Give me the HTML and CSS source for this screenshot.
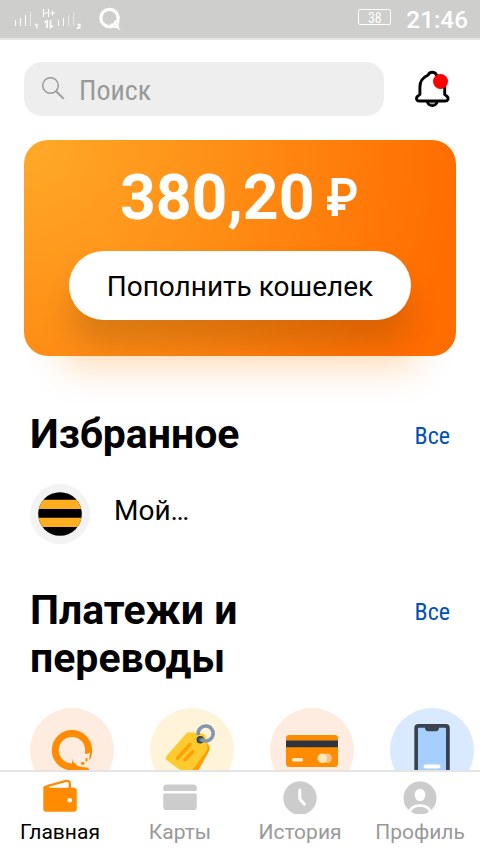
FILE: index.html
```html
<!DOCTYPE html>
<html lang="ru">
<head>
<meta charset="utf-8">
<meta name="viewport" content="width=device-width, initial-scale=1">
<title>Кошелек</title>
<link rel="stylesheet" href="styles.css">
</head>
<body>
<div class="app">
  <header class="status">
    <svg class="status-signal" width="72" height="24" viewBox="0 0 72 24" fill="none" stroke="#fff">
      <path d="M2.500 11v6M7.500 9v8M12.500 6v11M45.500 11v6M50.500 9v8"/>
      <path d="M17.500 3v14M55.500 6v11M60.500 3v14" opacity=".5"/>
      <path d="M30.500 0v8M35.500 0v8M30.500 4h5M37 4h5M39.500 1.500v5"/>
      <path d="M31.500 13.500l2.500-1.500v7M37.500 11v7.500l2.500-2" stroke-width="1.600"/>
      <path d="M22 15.500h2v4M64 15.500h3v1.500l-2.500 2h3" stroke-width="1.300"/>
    </svg>
    <svg class="status-qiwi" width="24" height="25" viewBox="0 0 24 25">
      <circle cx="11.500" cy="11" r="8.700" fill="none" stroke="#fff" stroke-width="3.300"/>
      <path d="M12 17l4-1 .5-3 2 2 3-1-1 4 .5 3c.5.800 1.300 1.200 1.700 2.500-3-2-4.500-2.800-8-3z" fill="#fff"/>
      <path d="M16.800 18v1M18.800 16.200v1" stroke="#cececd"/>
    </svg>
    <span class="battery">38</span>
    <time class="clock">21:46</time>
  </header>

  <main class="content">
    <div class="top">
      <div class="search">
        <svg width="24" height="24" viewBox="0 0 24 24" fill="none" stroke="#9b9b9b">
          <circle cx="9.500" cy="8.500" r="7.800" stroke-width="1.500"/><path d="M15 14.200l7.800 7.700" stroke-width="1.900"/>
        </svg>
        <span class="condensed">Поиск</span>
      </div>
      <svg class="bell" width="36" height="38" viewBox="0 0 36 38" fill="none">
        <path d="M12 31c1 3.500 3 4.700 5.300 4.700s4.300-1.200 5.300-4.700" fill="#aaa" stroke="#000" stroke-width="2.700"/>
        <path d="M13.200 5C14 2.800 15.600 2.300 17.300 2.300s3.300.5 4.100 2.700c5.300 2.300 8.300 6.300 8.300 12v7.500l2.600 2.200c1.500 2 .4 4.300-1.800 4.300H4.100c-2.300 0-3.300-2.300-1.900-4.300l2.700-2.200V17c0-5.700 3-9.700 8.300-12z" fill="#fff" stroke="#000" stroke-width="2.900" stroke-linejoin="round"/>
        <circle cx="25.500" cy="11.500" r="7.500" fill="#f00"/>
      </svg>
    </div>

    <section class="wallet">
      <div class="balance"><span>380,20</span><span class="currency">₽</span></div>
      <button class="refill">Пополнить кошелек</button>
    </section>

    <section class="favourites">
      <div class="section-head"><h2>Избранное</h2><a class="condensed">Все</a></div>
      <div class="favourite">
        <svg width="60" height="60" viewBox="0 0 60 60">
          <clipPath id="disc"><circle cx="30" cy="30" r="21.800"/></clipPath>
          <circle cx="30" cy="30" r="30" fill="#f3f3f3"/>
          <g clip-path="url(#disc)"><path fill="#000" d="M8 8h44v44H8z"/><path fill="#ffae21" d="M8 15.800h44V25H8zM8 33.700h44V43H8z"/></g>
        </svg>
        <span>Мой…</span>
      </div>
    </section>

    <section class="payments">
      <div class="section-head"><h2>Платежи и переводы</h2><a class="condensed">Все</a></div>
      <div class="services">
        <svg width="84" height="84" viewBox="0 0 84 84">
          <circle cx="42" cy="42" r="42" fill="#feece0"/>
          <circle cx="42" cy="42.200" r="16.700" fill="none" stroke="#ff8c00" stroke-width="7"/>
          <path d="M42.500 51l4 2.300 4-2.500c1-1.500.5-3.500 2-6.500 1 1 2 1.700 4 1.700l3.500-1.500-.8 5 1.500 9.500-6 .5-7-.5z" fill="#feece0"/>
          <path d="M42.300 51c1 5 5 7.500 10 8l5 .5 4 4-20-.5z" fill="#ff8c00"/>
          <ellipse cx="52.700" cy="55.500" rx="1.900" ry="1.400" fill="#ff8c00"/><ellipse cx="56.500" cy="51.700" rx="1.100" ry="2" fill="#ff8c00"/>
        </svg>
        <svg width="84" height="84" viewBox="0 0 84 84">
          <circle cx="42" cy="42" r="42" fill="#fff4d9"/>
          <path d="M51 27l7 9 1.500 3c.5 2 0 3-1 5L42 74 30 67z" fill="#ff9f05"/>
          <path d="M39.500 24.200l13 1.300c2 .3 3 1.500 3.300 3.500l1.500 10c.2 2-.3 3-1.500 5L38 68 16.500 52c-1.200-1-1-2.500 0-4l19.700-22.500c1-1 2-1.400 3.300-1.300z" fill="#fecb2f"/>
          <path d="M40 36.500L27.500 50.200M42.700 43.700l-7.500 8" stroke="#ff9f05" stroke-width="3.600" stroke-linecap="round"/>
          <circle cx="50.300" cy="31.700" r="3" fill="#52617a" stroke="#353d4e" stroke-width="1.500"/>
          <path d="M48.300 27a7.500 7.500 0 1 1 2.500 4.200" fill="none" stroke="#8495ae" stroke-width="3.500"/>
        </svg>
        <svg width="84" height="84" viewBox="0 0 84 84">
          <circle cx="42" cy="42" r="42" fill="#feece0"/>
          <rect x="16" y="27" width="52" height="32" rx="3" fill="#ff8c00"/>
          <path d="M16 32.500h52v6.700H16z" fill="#2f343f"/>
          <rect x="22" y="50" width="11" height="3.500" rx="1.600" fill="#ffeccb"/>
          <circle cx="57.200" cy="50.300" r="4.800" fill="#ffc183"/><circle cx="52.300" cy="50.300" r="4.800" fill="#ffe8c0"/>
        </svg>
        <svg width="84" height="84" viewBox="0 0 84 84">
          <circle cx="42" cy="42" r="42" fill="#d9eaff"/>
          <rect x="24.300" y="16" width="35.500" height="70" rx="4" fill="#39444f"/>
          <path d="M28 21c0-1 .5-1.200 1.200-1.200H35c0 2 1 3.500 3 3.500h8c2 0 3-1.500 3-3.500h5.500c1 0 1.500.2 1.500 1.200v60H28z" fill="#a6ceff"/>
          <rect x="33.500" y="56.500" width="17" height="4" rx="2" fill="#fff"/>
        </svg>
      </div>
    </section>
  </main>

  <nav class="tabs">
    <a class="tab active">
      <svg width="36" height="36" viewBox="0 0 36 36"><path d="M5.200 8.200L23 3.200c3-.8 4.900.2 4.900 2.800v5" fill="none" stroke="#ff8c00" stroke-width="2.400"/><path d="M2 8.200C1.300 8.700 1.300 9.500 1.300 10v21c0 1.700 1 2.800 2.700 2.800h28c1.700 0 2.800-1.100 2.800-2.800V12.500c0-1.500-1-2.800-2.800-2.800H8L5 7.200z" fill="#ff8c00"/><circle cx="27.700" cy="22.300" r="2.300" fill="#fff"/></svg>
      <span>Главная</span>
    </a>
    <a class="tab">
      <svg width="36" height="36" viewBox="0 0 36 36" fill="#ccc"><path d="M1.300 13V9.500c0-2 1-3.100 3-3.100h27.400c2 0 3 1.100 3 3.100V13zM1.300 15.500h33.400v13.400c0 2-1 3.100-3 3.100H4.300c-2 0-3-1.100-3-3.100z"/></svg>
      <span>Карты</span>
    </a>
    <a class="tab">
      <svg width="36" height="36" viewBox="0 0 36 36"><circle cx="18" cy="20" r="16.700" fill="#ccc"/><path d="M17.800 12v9l4.700 5.200" fill="none" stroke="#fff" stroke-width="3" stroke-linecap="round" stroke-linejoin="round"/></svg>
      <span>История</span>
    </a>
    <a class="tab">
      <svg width="36" height="36" viewBox="0 0 36 36"><clipPath id="avatar"><circle cx="18" cy="20" r="16.700"/></clipPath><g clip-path="url(#avatar)"><circle cx="18" cy="20" r="16.700" fill="#ccc"/><ellipse cx="18" cy="17" rx="5.300" ry="6.200" fill="#fff"/><path d="M7 35c1.500-5.500 6-7.500 11-7.500s9.500 2 11 7.500" fill="none" stroke="#fff" stroke-width="2.700"/></g></svg>
      <span>Профиль</span>
    </a>
  </nav>
</div>
</body>
</html>
```
FILE: styles.css
```css
* { box-sizing: border-box; }
body { margin: 0; background: #fff; color: #000; font-family: Roboto, "Noto Sans", sans-serif; }
.app { display: flex; flex-direction: column; width: 480px; height: 854px; overflow: hidden; }

.status { flex: none; display: flex; align-items: flex-start; height: 40px; padding: 0 12px 0 13px; background: #cececc; border-bottom: 2px solid #e4e4e4; color: #fff; }
.status-signal { margin-top: 9px; }
.status-qiwi { margin: 7px 0 0 13px; }
.battery { width: 33px; height: 16px; margin: 9px 15px 0 auto; border: 1px solid #fff; border-radius: 2px; font-size: 14px; line-height: 16px; text-align: center; font-family: "Roboto Condensed", Roboto, sans-serif; font-stretch: 75%; }
.clock { font-size: 24.300px; line-height: 40px; font-weight: 500; }

.content { flex: 1; min-height: 0; overflow: hidden; padding: 22px 24px 0; }
.condensed { font-family: "Roboto Condensed", Roboto, sans-serif; font-stretch: 75%; }
.top { display: flex; height: 54px; }
.search { display: flex; width: 360px; border-radius: 18px; background: #eee; color: #999; font-size: 28px; line-height: 58px; padding-left: 17px; gap: 14px; }
.search svg { margin-top: 15px; }
.bell { margin: 8px 0 0 31px; }

.wallet { height: 216px; margin-top: 24px; border-radius: 24px; overflow: hidden; background: radial-gradient(circle 440px at 0 0, #ffaa28, #ff8c14 50%, #ff6c00); box-shadow: 0 50px 34px -40px rgba(255, 130, 0, .3); display: flex; flex-direction: column; align-items: center; }
.balance { display: flex; justify-content: center; gap: 11px; height: 111px; color: #fff; font-size: 62.500px; line-height: 115px; font-weight: 700; }
.currency { font-size: 54px; line-height: 115px; font-weight: 600; transform: scaleX(.86); transform-origin: left; margin-right: -3px; }
.refill { width: 342px; height: 69px; border: 0; border-radius: 35px; background: #fff; color: #000; font: 28px/70px Roboto, sans-serif; padding: 1px 0 0; box-shadow: 0 26px 34px -2px rgba(0, 0, 0, .155); }

.section-head { display: flex; justify-content: space-between; padding: 0 6px; }
.section-head h2 { margin: 0; width: 260px; font-size: 41px; line-height: 48px; font-weight: 700; }
.section-head a { color: #0050b8; font-size: 24px; line-height: 52px; }
.favourites { margin-top: 54px; }
.favourites .section-head { height: 48px; }
.favourite { display: flex; gap: 24px; margin-top: 26px; padding-left: 6px; font-size: 28px; line-height: 54px; }
.payments { margin-top: 42px; }
.services { display: flex; gap: 36px; margin-top: 26px; padding-left: 6px; }
.services svg { flex: none; }

.tabs { flex: none; display: flex; height: 84px; border-top: 2px solid #e4e4e4; background: #fff; }
.tab { width: 120px; display: flex; flex-direction: column; align-items: center; padding-top: 6px; color: #999; font-size: 21px; line-height: 36px; }
.tab.active { color: #000; }
```
